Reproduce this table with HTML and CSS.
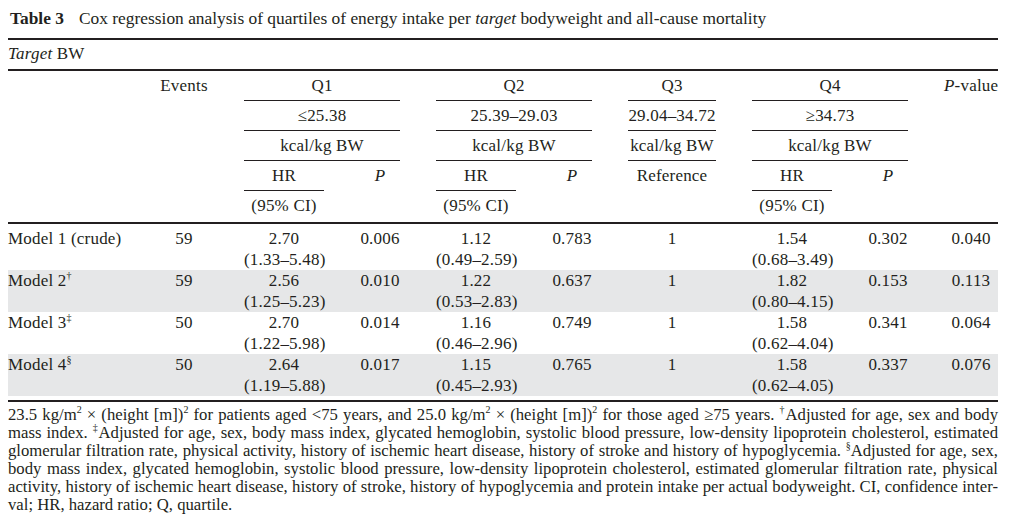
FILE: index.html
```html
<!DOCTYPE html>
<html lang="en">
<head>
<meta charset="utf-8">
<title>Table 3</title>
<link rel="stylesheet" href="styles.css">
</head>
<body>
<div class="page">
  <p class="caption"><b class="tag">Table 3</b>Cox regression analysis of quartiles of energy intake per <i>target</i> bodyweight and all-cause mortality</p>
  <table class="tbl">
    <colgroup>
      <col class="c-label"><col class="c-events"><col class="c-hr"><col class="c-p"><col class="c-hr"><col class="c-p"><col class="c-ref"><col class="c-hr"><col class="c-p"><col class="c-pv">
    </colgroup>
    <thead>
      <tr class="sect"><th colspan="10" class="sect-cell"><i>Target</i> BW</th></tr>
      <tr class="hrow">
        <th class="lbl"><div class="h"></div></th>
        <th><div class="h">Events</div></th>
        <th colspan="2"><div class="h ru">Q1</div></th>
        <th colspan="2"><div class="h ru">Q2</div></th>
        <th><div class="h ru">Q3</div></th>
        <th colspan="2"><div class="h ru">Q4</div></th>
        <th class="pv"><div class="h"><i>P</i>-value</div></th>
      </tr>
      <tr class="hrow">
        <th class="lbl"><div class="h"></div></th>
        <th><div class="h"></div></th>
        <th colspan="2"><div class="h ru">≤25.38</div></th>
        <th colspan="2"><div class="h ru">25.39–29.03</div></th>
        <th><div class="h ru">29.04–34.72</div></th>
        <th colspan="2"><div class="h ru">≥34.73</div></th>
        <th class="pv"><div class="h"></div></th>
      </tr>
      <tr class="hrow">
        <th class="lbl"><div class="h"></div></th>
        <th><div class="h"></div></th>
        <th colspan="2"><div class="h ru">kcal/kg BW</div></th>
        <th colspan="2"><div class="h ru">kcal/kg BW</div></th>
        <th><div class="h ru">kcal/kg BW</div></th>
        <th colspan="2"><div class="h ru">kcal/kg BW</div></th>
        <th class="pv"><div class="h"></div></th>
      </tr>
      <tr class="hrow">
        <th class="lbl"><div class="h"></div></th>
        <th><div class="h"></div></th>
        <th><div class="h ru">HR</div></th>
        <th><div class="h"><i>P</i></div></th>
        <th><div class="h ru">HR</div></th>
        <th><div class="h"><i>P</i></div></th>
        <th><div class="h">Reference</div></th>
        <th><div class="h ru">HR</div></th>
        <th><div class="h"><i>P</i></div></th>
        <th class="pv"><div class="h"></div></th>
      </tr>
      <tr class="hrow last">
        <th class="lbl"><div class="h"></div></th>
        <th><div class="h"></div></th>
        <th><div class="h">(95% CI)</div></th>
        <th><div class="h"></div></th>
        <th><div class="h">(95% CI)</div></th>
        <th><div class="h"></div></th>
        <th><div class="h"></div></th>
        <th><div class="h">(95% CI)</div></th>
        <th><div class="h"></div></th>
        <th class="pv"><div class="h"></div></th>
      </tr>
    </thead>
    <tbody>
      <tr class="first">
        <td class="lbl">Model 1 (crude)</td><td>59</td>
        <td>2.70<br>(1.33–5.48)</td><td>0.006</td>
        <td>1.12<br>(0.49–2.59)</td><td>0.783</td>
        <td>1</td>
        <td>1.54<br>(0.68–3.49)</td><td>0.302</td>
        <td class="pv">0.040</td>
      </tr>
      <tr class="shade">
        <td class="lbl">Model 2<sup>†</sup></td><td>59</td>
        <td>2.56<br>(1.25–5.23)</td><td>0.010</td>
        <td>1.22<br>(0.53–2.83)</td><td>0.637</td>
        <td>1</td>
        <td>1.82<br>(0.80–4.15)</td><td>0.153</td>
        <td class="pv">0.113</td>
      </tr>
      <tr>
        <td class="lbl">Model 3<sup>‡</sup></td><td>50</td>
        <td>2.70<br>(1.22–5.98)</td><td>0.014</td>
        <td>1.16<br>(0.46–2.96)</td><td>0.749</td>
        <td>1</td>
        <td>1.58<br>(0.62–4.04)</td><td>0.341</td>
        <td class="pv">0.064</td>
      </tr>
      <tr class="shade">
        <td class="lbl">Model 4<sup>§</sup></td><td>50</td>
        <td>2.64<br>(1.19–5.88)</td><td>0.017</td>
        <td>1.15<br>(0.45–2.93)</td><td>0.765</td>
        <td>1</td>
        <td>1.58<br>(0.62–4.05)</td><td>0.337</td>
        <td class="pv">0.076</td>
      </tr>
    </tbody>
  </table>
  <div class="notes">
    <span class="ln">23.5 kg/m<sup>2</sup> × (height [m])<sup>2</sup> for patients aged &lt;75 years, and 25.0 kg/m<sup>2</sup> × (height [m])<sup>2</sup> for those aged ≥75 years. <sup>†</sup>Adjusted for age, sex and body</span>
    <span class="ln">mass index. <sup>‡</sup>Adjusted for age, sex, body mass index, glycated hemoglobin, systolic blood pressure, low-density lipoprotein cholesterol, estimated</span>
    <span class="ln">glomerular filtration rate, physical activity, history of ischemic heart disease, history of stroke and history of hypoglycemia. <sup>§</sup>Adjusted for age, sex,</span>
    <span class="ln">body mass index, glycated hemoglobin, systolic blood pressure, low-density lipoprotein cholesterol, estimated glomerular filtration rate, physical</span>
    <span class="ln">activity, history of ischemic heart disease, history of stroke, history of hypoglycemia and protein intake per actual bodyweight. CI, confidence inter-</span>
    <span class="ln end">val; HR, hazard ratio; Q, quartile.</span>
  </div>
</div>
</body>
</html>
```

FILE: styles.css
```css
html, body {
  margin: 0;
  padding: 0;
  background: #ffffff;
}
body {
  padding: 8px;
  font-family: "Liberation Serif", "Times New Roman", serif;
  color: #231f20;
}
.page {
  width: 990px;
}
.caption {
  margin: 0;
  font-size: 17.4px;
  line-height: 20px;
  height: 20px;
  padding-left: 2px;
  white-space: nowrap;
}
.tag {
  margin-right: 15px;
}
.tbl {
  margin-top: 10px;
  width: 990px;
  table-layout: fixed;
  border-collapse: separate;
  border-spacing: 0;
  font-size: 17px;
  letter-spacing: 0.2px;
}
.c-label { width: 134px; }
.c-events { width: 84px; }
.c-hr { width: 116px; }
.c-p { width: 76px; }
.c-ref { width: 124px; }
.c-pv { width: 72px; }

.tbl th {
  font-weight: normal;
  padding: 0 18px;
  text-align: center;
  vertical-align: top;
  white-space: nowrap;
}
.tbl th.lbl, .tbl td.lbl {
  padding-left: 0;
  padding-right: 0;
  text-align: left;
}
.tbl th.pv, .tbl td.pv {
  padding-right: 0;
}
.sect-cell {
  text-align: left !important;
  padding: 4px 0 5px 0 !important;
  line-height: 20px;
  border-top: 2px solid #231f20;
  border-bottom: 2px solid #231f20;
}
.h {
  padding: 5px 0 4px 0;
  line-height: 20px;
  height: 20px;
  border-bottom: 1px solid transparent;
}
.h.ru {
  border-bottom-color: #231f20;
}
.hrow.last th {
  border-bottom: 2px solid #231f20;
}
.hrow.last .h {
  padding-bottom: 6px;
  border-bottom: 0;
}
.tbl td {
  padding: 0 18px;
  line-height: 21px;
  text-align: center;
  vertical-align: top;
  white-space: nowrap;
}
.tbl tr.first td {
  padding-top: 4px;
}
.tbl tr.shade td {
  background: #e6e7e8;
}
.tbl tbody tr {
  height: 42px;
}
.tbl tr.first {
  height: 46px;
}
sup {
  font-size: 10px;
  line-height: 0;
  vertical-align: 7px;
}
.notes {
  margin-top: 4px;
  border-top: 2px solid #231f20;
  padding-top: 4px;
  font-size: 16.7px;
  line-height: 18px;
}
.ln {
  display: block;
  white-space: nowrap;
  text-align: justify;
  text-align-last: justify;
}
.ln.end {
  text-align-last: left;
}
```
